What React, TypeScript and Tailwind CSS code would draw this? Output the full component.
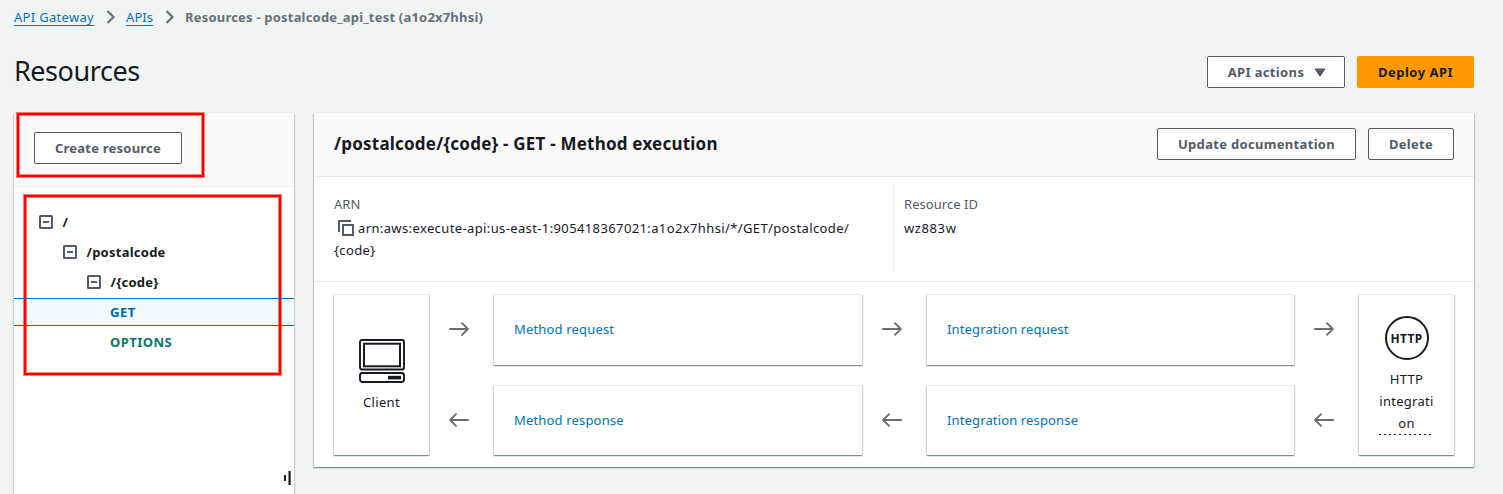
import type { ReactNode } from "react";

function Chevron() {
  return (
    <svg width="10" height="14" viewBox="0 0 10 14" fill="none" stroke="#687078" strokeWidth="2.2">
      <path d="M1.5 1 L7.5 7 L1.5 13" />
    </svg>
  );
}

function Button({ children, className = "" }: { children: ReactNode; className?: string }) {
  return (
    <button
      className={`flex h-8 shrink-0 items-center justify-center whitespace-nowrap rounded-[2px] border border-[#545b64] bg-white text-[13px] font-bold text-[#545b64] ${className}`}
    >
      {children}
    </button>
  );
}

function Collapse() {
  return (
    <svg width="14" height="14" viewBox="0 0 14 14" fill="none" stroke="#545b64" strokeWidth="2" className="shrink-0">
      <rect x="1" y="1" width="12" height="12" rx="0.5" />
      <path d="M4 7h6" />
    </svg>
  );
}

function Arrow({ left = false }: { left?: boolean }) {
  return (
    <svg width="20" height="14" viewBox="0 0 20 14" fill="none" stroke="#6b6b70" strokeWidth="1.9" strokeLinecap="round" strokeLinejoin="round">
      {left ? <path d="M19 7H1.5M7 1.2L1.2 7L7 12.8" /> : <path d="M1 7H18.5M13 1.2L18.8 7L13 12.8" />}
    </svg>
  );
}

function Arrows() {
  return (
    <div className="flex h-[161px] flex-1 flex-col items-center justify-between pb-[28px] pr-[6px] pt-[28px]">
      <Arrow />
      <Arrow left />
    </div>
  );
}

const cardShadow = "shadow-[0_1px_1px_0_rgba(0,28,36,0.3),1px_1px_1px_0_rgba(0,28,36,0.15),-1px_1px_1px_0_rgba(0,28,36,0.15)] border-t border-[#eaeded]";

function Steps({ top, bottom, className }: { top: string; bottom: string; className: string }) {
  return (
    <div className={`flex h-[161px] shrink-0 flex-col justify-between text-[#0073bb] ${className}`}>
      <div className={`flex h-[71px] items-center bg-white pb-[2px] pl-5 ${cardShadow}`}>{top}</div>
      <div className={`flex h-[70px] items-center bg-white pb-[2px] pl-5 ${cardShadow}`}>{bottom}</div>
    </div>
  );
}

function TreeRow({ label, className }: { label: string; className: string }) {
  return (
    <div className={`flex h-[30px] items-center gap-[9.5px] font-bold ${className}`}>
      <Collapse />
      <span>{label}</span>
    </div>
  );
}

function Highlight({ className }: { className: string }) {
  return (
    <div
      className={`pointer-events-none absolute border-2 border-[#ff0000] shadow-[0_0_0_1px_rgba(255,0,0,0.5),inset_0_0_0_1px_rgba(255,0,0,0.5)] ${className}`}
    />
  );
}

export default function App() {
  return (
    <div className="relative h-[494px] w-full overflow-hidden bg-[#f2f3f3] pl-[14px] pr-[29px] font-['Noto_Sans',sans-serif] text-[13px] leading-[22px] text-[#16191f]">
      <nav className="flex h-[34px] items-start whitespace-nowrap pt-[7px]">
        <a className="h-[19px] border-b border-[#0073bb] leading-[20px] tracking-[0.31px] text-[#0073bb]">API Gateway</a>
        <span className="ml-[12px] mr-[10px] pt-[3px]"><Chevron /></span>
        <a className="h-[19px] border-b border-[#0073bb] leading-[20px] tracking-[0.05px] text-[#0073bb]">APIs</a>
        <span className="ml-[12px] mr-[10px] pt-[3px]"><Chevron /></span>
        <span className="font-bold leading-[20px] tracking-[0.2px] text-[#687078]">Resources - postalcode_api_test (a1o2x7hhsi)</span>
      </nav>

      <div className="flex h-[79px] items-start justify-between">
        <h1 className="pt-[19px] text-[27px] leading-[36px] tracking-[-0.45px]">Resources</h1>
        <div className="flex gap-3 pt-[22px]">
          <Button className="w-[138px] gap-[10px] pl-[2px] tracking-[0.36px]">
            <span>API actions</span>
            <svg width="12" height="9" viewBox="0 0 12 9" fill="#545b64" stroke="#545b64" strokeWidth="1" strokeLinejoin="round">
              <path d="M1 1H11L6 8.3Z" />
            </svg>
          </Button>
          <button className="h-8 w-[117px] rounded-[2px] bg-[#ff9900] text-[13px] font-bold tracking-[0.48px] text-[#16191f]">Deploy API</button>
        </div>
      </div>

      <div className="flex items-start gap-5">
        <aside className="relative h-[400px] w-[280px] shrink-0 bg-white shadow-[0_-1px_0_0_#eaeded,1px_1px_1px_0_rgba(0,28,36,0.17),-1px_1px_1px_0_rgba(0,28,36,0.17)]">
          <div className="h-[74px] border-b border-[#eaeded] bg-[#fafafa] pl-5 pt-[19px]">
            <Button className="w-[148px] tracking-[0.23px]">Create resource</Button>
          </div>
          <div className="pt-[20px] tracking-[0.25px]">
            <TreeRow label="/" className="pl-[25px]" />
            <TreeRow label="/postalcode" className="pl-[49px]" />
            <TreeRow label="/{code}" className="pl-[73px]" />
            <div className="mt-px flex h-[28px] items-center border-y border-[#0073bb] bg-[#f1faff] pl-[96px] font-bold tracking-[0.5px] text-[#0067b3]">GET</div>
            <div className="mt-px flex h-[30px] items-center pl-[96px] font-bold tracking-[0.45px] text-[#0b7868]">OPTIONS</div>
          </div>
          <svg width="8" height="14" viewBox="0 0 8 14" fill="#16191f" className="absolute left-[270px] top-[358px]">
            <rect x="0" y="4" width="2" height="6" rx="0.5" />
            <rect x="4.5" y="0" width="2.2" height="14" rx="0.5" />
          </svg>
        </aside>

        <main className="h-[354px] min-w-0 flex-1 bg-white shadow-[0_-1px_0_0_#eaeded,0_1px_1px_0_rgba(0,28,36,0.25),1px_1px_1px_0_rgba(0,28,36,0.17),-1px_1px_1px_0_rgba(0,28,36,0.17)]">
          <header className="flex h-16 items-start justify-between border-b border-[#eaeded] bg-[#fafafa] px-5 pt-[15px]">
            <h2 className="whitespace-nowrap pt-[5px] text-[17px] font-bold tracking-[0.21px]">/postalcode/{"{code}"} - GET - Method execution</h2>
            <div className="flex gap-3">
              <Button className="w-[199px] tracking-[0.32px]">Update documentation</Button>
              <Button className="w-[86px] tracking-[0.3px]">Delete</Button>
            </div>
          </header>

          <section className="flex h-[105px] border-b border-[#eaeded] pb-[9px] pl-5 pt-[7px]">
            <div className="w-[560px] border-r border-[#eaeded] pt-[9px]">
              <div className="text-[#545b64]">ARN</div>
              <div className="mt-[2px] whitespace-nowrap tracking-[0.38px]">
                <svg width="16" height="16" viewBox="0 0 16 16" fill="none" stroke="#545b64" strokeWidth="2" className="ml-1 mr-1 inline-block align-[-3px]">
                  <path d="M1 12V1H13" />
                  <rect x="5" y="5" width="10" height="10" />
                </svg>
                arn:aws:execute-api:us-east-1:905418367021:a1o2x7hhsi/*/GET/postalcode/
                <br />
                {"{code}"}
              </div>
            </div>
            <div className="pl-[10px] pt-[9px]">
              <div className="tracking-[0.05px] text-[#545b64]">Resource ID</div>
              <div className="mt-[2px] tracking-[0.6px]">wz883w</div>
            </div>
          </section>

          <section className="flex px-5 pt-[12px]">
            <div className={`flex h-[161px] w-[95px] shrink-0 flex-col items-center bg-white pt-[44px] ${cardShadow}`}>
              <svg width="46" height="44" viewBox="0 0 46 44" fill="none" stroke="#16191f">
                <rect x="1" y="1" width="44" height="29.5" rx="2" strokeWidth="1.9" />
                <rect x="5" y="4.7" width="36" height="22.6" strokeWidth="2" />
                <rect x="1" y="34" width="44" height="9" rx="2.5" strokeWidth="1.9" />
                <rect x="29" y="36.8" width="13" height="3.6" fill="#16191f" stroke="none" />
              </svg>
              <span className="mt-[8px] tracking-[0.35px]">Client</span>
            </div>
            <Arrows />
            <Steps top="Method request" bottom="Method response" className="w-[368px] tracking-[0.17px]" />
            <Arrows />
            <Steps top="Integration request" bottom="Integration response" className="w-[367px] tracking-[0.14px]" />
            <Arrows />
            <div className={`flex h-[161px] w-[95px] shrink-0 flex-col items-center bg-white pt-[21px] ${cardShadow}`}>
              <div className="flex h-11 w-11 items-center justify-center rounded-full border-2 border-[#16191f] pt-px text-[12px] font-bold tracking-[0.3px]">HTTP</div>
              <div className="mt-[8px] w-[55px] break-all text-center tracking-[0.28px]">
                HTTP<br />integrati<br />on
              </div>
              <div className="h-px w-[55px] bg-[repeating-linear-gradient(90deg,#16191f_0_2px,transparent_2px_5px)]" />
            </div>
          </section>
        </main>
      </div>

      <Highlight className="left-[17px] top-[113px] h-[64px] w-[187px]" />
      <Highlight className="left-[24px] top-[195px] h-[180px] w-[257px]" />
    </div>
  );
}
